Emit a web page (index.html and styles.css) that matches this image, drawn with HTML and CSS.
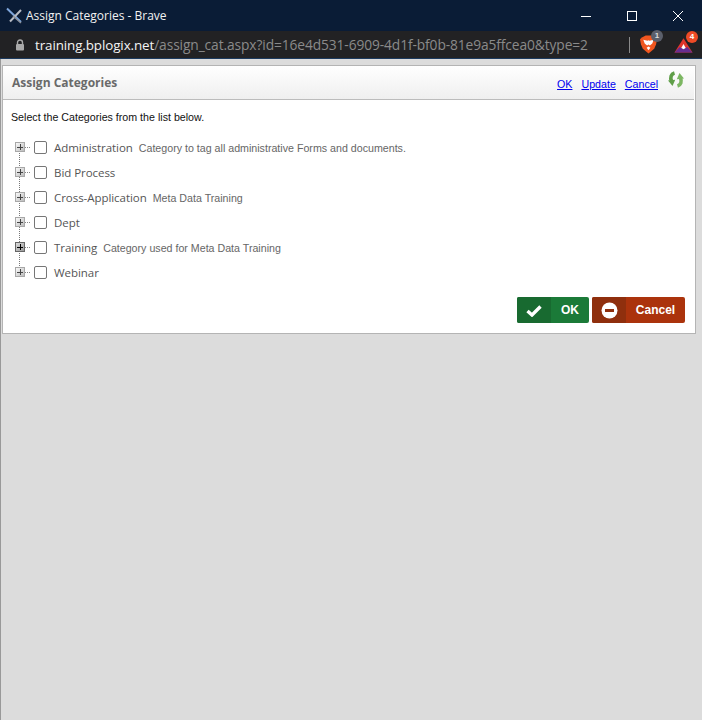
FILE: index.html
```html
<!DOCTYPE html>
<html lang="en">
<head>
<meta charset="utf-8">
<title>Assign Categories - Brave</title>
<link rel="stylesheet" href="styles.css">
</head>
<body>
<div class="titlebar">
  <svg class="app-icon" width="18" height="18" viewBox="0 0 18 18"><path d="M1 1.500 L15 15" stroke="#7ea6dc" stroke-width="2" fill="none"/><path d="M4 14.500 L15 3" stroke="#b8bcc4" stroke-width="2" fill="none"/><path d="M7 9 L15 16" stroke="#8a8f98" stroke-width="1.400" fill="none"/></svg>
  <span class="title">Assign Categories - Brave</span>
  <div class="winctl">
    <svg width="10" height="10" viewBox="0 0 10 10"><path d="M0 5.500H10" stroke="#fff" fill="none"/></svg>
    <svg width="10" height="10" viewBox="0 0 10 10"><rect x=".5" y=".5" width="9" height="9" stroke="#fff" fill="none"/></svg>
    <svg width="10" height="10" viewBox="0 0 10 10"><path d="M0 0L10 10M10 0L0 10" stroke="#fff" fill="none"/></svg>
  </div>
</div>
<div class="urlbar">
  <svg class="lock" width="10" height="12" viewBox="0 0 10 12"><path d="M2.500 5V3.500a2.500 2.500 0 0 1 5 0V5" stroke="#a9a9a9" stroke-width="1.400" fill="none"/><rect x="1" y="5" width="8" height="6.500" rx="1" fill="#a9a9a9"/></svg>
  <div class="url"><span class="host">training.bplogix.net</span><span class="path">/assign_cat.aspx?id=16e4d531-6909-4d1f-bf0b-81e9a5ffcea0&amp;type=2</span></div>
  <span class="sep"></span>
  <span class="ext">
    <svg width="17" height="19" viewBox="0 0 18 20"><path d="M2 2.500 L6 .5 H12 L16 2.500 L18 4.500 L17 10 L15 14.500 L9 19.500 L3 14.500 L1 10 L0 4.500Z" fill="#f0561f"/><path d="M3.500 5 L8 6 L9 5.500 L10 6 L14.500 5 L13 9 L10.500 11 L9 10 L7.500 11 L5 9Z" fill="#fff"/><path d="M7 13.500 L9 12 L11 13.500 L9 16Z" fill="#fff"/></svg>
    <span class="badge badge-grey">1</span>
  </span>
  <span class="ext ext-bat">
    <svg width="19" height="16" viewBox="0 0 20 16"><path d="M10 1 L19.500 16 H.5Z" fill="#e0352b"/><path d="M10 7 L14 14 H6Z" fill="#fff"/><path d="M.5 16 L6 10 L10 12.500 L14 10 L19.500 16Z" fill="#662d91"/></svg>
    <span class="badge badge-red">4</span>
  </span>
</div>
<main class="page">
  <section class="panel">
    <header class="panel-head">
      <h1>Assign Categories</h1>
      <nav class="links">
        <a href="#">OK</a><a href="#">Update</a><a href="#">Cancel</a>
        <svg class="refresh" width="16" height="17" viewBox="0 0 16 17"><path d="M6.500 2 C3 3 2 6.500 3.500 10" stroke="#5f9e48" stroke-width="3.600" fill="none"/><path d="M0 9.500 L7.200 8.800 L4.500 15Z" fill="#5f9e48"/><path d="M9.500 15 C13 14 14 10.500 12.500 7" stroke="#7cb662" stroke-width="3.600" fill="none"/><path d="M16 7.500 L8.800 8.200 L11.500 2Z" fill="#7cb662"/></svg>
      </nav>
    </header>
    <p class="hint">Select the Categories from the list below.</p>
    <ul class="tree">
      <li><span class="exp"></span><span class="dots"></span><span class="check"></span><span class="name">Administration</span><span class="desc">Category to tag all administrative Forms and documents.</span></li>
      <li><span class="exp"></span><span class="dots"></span><span class="check"></span><span class="name">Bid Process</span></li>
      <li><span class="exp"></span><span class="dots"></span><span class="check"></span><span class="name">Cross-Application</span><span class="desc">Meta Data Training</span></li>
      <li><span class="exp"></span><span class="dots"></span><span class="check"></span><span class="name">Dept</span></li>
      <li><span class="exp exp-hover"></span><span class="dots"></span><span class="check"></span><span class="name">Training</span><span class="desc">Category used for Meta Data Training</span></li>
      <li><span class="exp"></span><span class="dots"></span><span class="check"></span><span class="name">Webinar</span></li>
    </ul>
    <div class="actions">
      <button class="btn btn-ok" type="button"><span class="btn-icon"><svg width="16" height="13" viewBox="0 0 16 13"><path d="M1.500 7 L6 11 L14.500 2.500" stroke="#fff" stroke-width="3.400" fill="none"/></svg></span><span class="btn-text">OK</span></button>
      <button class="btn btn-cancel" type="button"><span class="btn-icon"><svg width="17" height="17" viewBox="0 0 17 17"><circle cx="8.500" cy="8.500" r="8" fill="#fff"/><rect x="4" y="7" width="9" height="3" fill="#8f2f0d"/></svg></span><span class="btn-text">Cancel</span></button>
    </div>
  </section>
</main>
</body>
</html>
```
FILE: styles.css
```css
* { box-sizing: border-box; }
html, body { margin: 0; padding: 0; height: 100%; }
body { width: 702px; height: 720px; overflow: hidden; background: #dcdcdc; display: flex; flex-direction: column; font-family: "Liberation Sans", Arial, sans-serif; }

.titlebar { height: 31px; flex: none; background: #0a1c36; display: flex; align-items: center; padding-left: 6px; color: #fff; }
.app-icon { flex: none; }
.title { margin-left: 2px; font: 12px "Open Sans", sans-serif; color: #f2f2f2; white-space: nowrap; }
.winctl { margin-left: auto; display: flex; gap: 36px; padding-right: 19px; align-items: center; }

.urlbar { height: 28px; flex: none; background: #222224; border-bottom: 1px solid #1c3a5e; display: flex; align-items: center; padding-left: 15px; }
.lock { flex: none; }
.url { margin-left: 10px; width: 594px; flex: none; font: 13.780px "Open Sans", sans-serif; white-space: nowrap; letter-spacing: -.1px; }
.host { color: #f4f4f4; font-weight: 500; font-size: 13.400px; }
.path { color: #8a8a8a; }
.sep { width: 1px; height: 16px; background: #8a8a8a; flex: none; }
.ext { position: relative; display: flex; margin-left: 10px; flex: none; }
.ext-bat { margin-left: 17px; }
.badge { position: absolute; top: -5px; left: 11px; width: 12px; height: 12px; border-radius: 50%; font: bold 8px/12px "Liberation Sans", sans-serif; text-align: center; color: #fff; }
.badge-grey { background: #5b5f6b; color: #ddd; }
.badge-red { background: #ef4b26; left: 12px; top: -6px; }

.page { flex: 1; padding: 6px 6px 0 2px; border-left: 1px solid #999; }
.panel { margin-left: -1px; background: #fff; border: 1px solid #b4b4b4; height: 269px; display: flex; flex-direction: column; }

.panel-head { height: 34px; flex: none; display: flex; align-items: center; padding: 0 0 0 9px; background: linear-gradient(#ffffff, #efefef); border-bottom: 1px solid #bcbcbc; margin-right: 1px; }
.panel-head h1 { margin: 0; font: bold 12px "Open Sans", "Liberation Sans", sans-serif; color: #6a6a6a; }
.links { margin-left: auto; display: flex; align-items: center; padding-right: 10px; font-size: 10.670px; }
.links a { color: #0000ee; text-decoration: underline; margin-left: 9px; position: relative; top: 1px; }
.refresh { margin-left: 10px; position: relative; top: -3px; flex: none; }

.hint { margin: 11px 0 0 8px; font-size: 10.670px; color: #111; line-height: 12px; }

.tree { list-style: none; margin: 12px 0 0; padding: 0 0 0 12px; position: relative; }
.tree::before { content: ""; position: absolute; left: 16px; top: 12px; height: 125px; border-left: 1px dotted #777; }
.tree li { height: 25px; display: flex; align-items: center; }
.exp { width: 10px; height: 10px; flex: none; border: 1px solid #a8a8a8; background-color: #ddd; background-image: linear-gradient(#444, #444), linear-gradient(#444, #444), linear-gradient(135deg, #fafafa, #bcbcbc); background-size: 6px 1px, 1px 6px, 100% 100%; background-position: center, center, center; background-repeat: no-repeat; position: relative; z-index: 1; margin-top: -1px; }
.exp-hover { border-color: #666; background-image: linear-gradient(#000, #000), linear-gradient(#000, #000), linear-gradient(135deg, #ddd, #999); }
.dots { width: 5px; border-top: 1px dotted #888; margin-top: -1px; flex: none; }
.check { width: 13px; height: 13px; flex: none; margin-left: 4px; border: 1px solid #767676; border-radius: 2px; background: #fff; }
.name { margin-left: 7px; font: 11.500px "Open Sans", sans-serif; color: #555; letter-spacing: -.05px; white-space: nowrap; }
.desc { margin-left: 6px; font-size: 10.670px; color: #666; white-space: nowrap; }

.actions { margin-top: 12px; display: flex; justify-content: flex-end; gap: 3px; padding-right: 10px; }
.btn { height: 26px; padding: 0; border: 0; border-radius: 2px; display: flex; align-items: stretch; color: #fff; font: bold 12px "Liberation Sans", sans-serif; overflow: hidden; }
.btn-icon { display: flex; align-items: center; justify-content: center; flex: none; }
.btn-text { display: flex; align-items: center; justify-content: center; flex: 1; }
.btn-ok { width: 72px; background: #1b7a38; }
.btn-ok .btn-icon { width: 34px; background: #186a30; }
.btn-cancel { width: 93px; background: #ab330c; }
.btn-cancel .btn-icon { width: 34px; background: #8f2f0d; }
```
